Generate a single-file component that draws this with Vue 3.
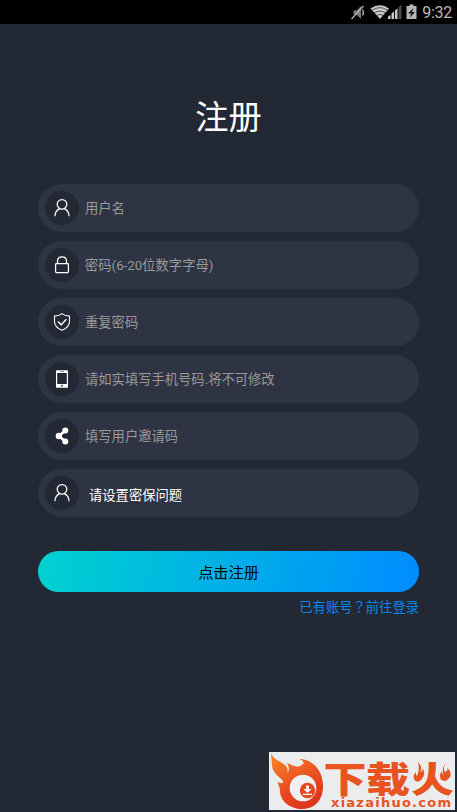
<script setup>
const fields = [
  { icon: 'user', label: '用户名' },
  { icon: 'lock', label: '密码(6-20位数字字母)' },
  { icon: 'shield', label: '重复密码' },
  { icon: 'phone', label: '请如实填写手机号码.将不可修改' },
  { icon: 'share', label: '填写用户邀请码' },
  { icon: 'user', label: '请设置密保问题', select: true },
]
</script>

<template>
  <div class="screen">
    <header class="status">
      <svg class="status-icons" width="70" height="24" viewBox="0 0 70 24">
        <path d="M4.500 10.500h3l4.500-4.500v13l-4.500-4.500h-3z" fill="#777" />
        <path d="M13.500 9.500q2 3 0 6M2.500 19L14.500 6" fill="none" stroke="#b0b0b0" stroke-width="1.300" />
        <path d="M21.500 8.500Q31 1.800 40 8.500L31 19z" fill="#c9c9c9" />
        <path d="M23 10.300Q31 5 38.500 10.300M25 13Q31 9 36.500 13M27.300 15.600Q31 13 34.200 15.600" fill="none" stroke="#000" stroke-width=".6" />
        <path d="M39 19v-2.500l2.500-1.500V19zM42.500 19v-5.500l2.500-2V19zM46 19v-8.500l2.500-2V19z" fill="#c9c9c9" />
        <path d="M49.500 19V7.500L52.500 4.500V19z" fill="#4c4c4c" />
        <path d="M57.500 6h3V4.500h4V6h3v13h-10z" fill="#b5b5b5" />
        <path d="M64.500 8l-5.500 5.500h3l-1 4 5-5.500h-3z" fill="#161616" />
      </svg>
      <span class="time">9:32</span>
    </header>

    <main class="content">
      <h1 class="title">注册</h1>
      <form class="form" @submit.prevent>
        <div v-for="(field, i) in fields" :key="i" class="field">
          <span class="badge">
            <svg width="20" height="20" viewBox="0 0 20 20" fill="none" stroke="#fff" stroke-width="1.25">
              <g v-if="field.icon === 'user'">
                <circle cx="10" cy="6.300" r="4.800" />
                <path d="M2.900 18.300C3 13.800 5.400 11.600 7.700 10.600M12.300 10.600C14.600 11.600 17 13.800 17.100 18.300" />
              </g>
              <g v-else-if="field.icon === 'lock'">
                <rect x="3.600" y="8.500" width="12.800" height="9" rx="0.800" />
                <path d="M5.500 8.500V6.300Q5.500 1.900 10 1.900T14.500 6.300V8.500" />
              </g>
              <g v-else-if="field.icon === 'shield'" stroke-width="1.100">
                <path d="M10 1.700Q12.500 4 17.500 4.100V9.500C17.500 14 14.500 16.500 10 18.300C5.500 16.500 2.500 14 2.500 9.500V4.100Q7.500 4 10 1.700Z" />
                <path d="M6 9.500l3.200 3.200 5.200-5.500" stroke-width="1.400" />
              </g>
              <g v-else-if="field.icon === 'phone'" stroke="none">
                <path fill="#fff" fill-rule="evenodd" d="M4.900 1.300h10.300q.8 0 .8.800v15.800q0 .8-.8.800H4.900q-.9 0-.9-.8V2.100q0-.8.900-.8zM5.200 4v11h9.600V4z" />
                <path d="M8 2.500h4" stroke="#777b84" stroke-width=".7" />
                <circle cx="10" cy="16.700" r=".9" fill="#232835" />
              </g>
              <g v-else fill="#fff" stroke="none">
                <circle cx="6.900" cy="10" r="3.200" />
                <circle cx="13.300" cy="4.500" r="3" />
                <circle cx="13.300" cy="15.600" r="3" />
                <path d="M13.300 4.500L6.900 10l6.400 5.600" fill="none" stroke="#fff" stroke-width="2.600" />
              </g>
            </svg>
          </span>
          <span class="label" :class="{ select: field.select }">{{ field.label }}</span>
        </div>
        <button class="submit">点击注册</button>
      </form>
      <a class="login">已有账号<span class="mark">？</span>前往登录</a>
    </main>

    <svg class="watermark" width="186" height="58" viewBox="0 0 186 58">
      <defs>
        <linearGradient id="flame" x1="0" y1="0" x2=".5" y2="1">
          <stop offset="0" stop-color="#f78a28" />
          <stop offset=".7" stop-color="#e9481e" />
          <stop offset="1" stop-color="#df371c" />
        </linearGradient>
      </defs>
      <rect width="186" height="58" fill="#ebecee" />
      <path fill="url(#flame)" d="M2 1C5 8 11 9 16 13Q20 17 18 21Q22 18 18 11C25 14 29 17 34 12C36 10 33 8 30 7C43 7 54 18 54 34C54 48 46 57 33 57C21 57 11 49 11 39C11 34 8 32 9 30C11 31 13 32 14 30C15 27 4 23 3 14C3 9 2 5 2 1Z" />
      <circle cx="34" cy="36" r="13.300" fill="#eff0f2" />
      <circle cx="38.500" cy="38.500" r="7.700" fill="#e44620" />
      <path d="M37.200 33.500h2.600v3.500h2.700l-4 4-4-4h2.700zM34 41.800h9V43h-9z" fill="#fff" />
      <g class="brand">
        <text x="54.500" y="41" textLength="43" lengthAdjust="spacingAndGlyphs">下</text>
        <text x="97" y="41" textLength="44" lengthAdjust="spacingAndGlyphs">载</text>
        <text x="142" y="41" textLength="43" lengthAdjust="spacingAndGlyphs">火</text>
      </g>
      <path d="M142 9h14.500v17L152 31H142zM171.500 9H186v22h-10l-4.500-5z" fill="#ebecee" />
      <g fill="#e9531f">
        <path d="M149 10Q154 15 151 20Q154 19 153.500 16Q157 22 153 27Q149 32 145.500 28Q143 24 147 20Q146.500 23 148 24Q151 17 149 10Z" />
        <path d="M178 10Q173 15 176 20Q179 19 178.500 16Q183 20 181 25Q176 32 172 27Q169.500 23 173 19Q173 22 174.500 23Q172 15 178 10Z" />
      </g>
      <text class="domain" x="62" y="55" textLength="120" lengthAdjust="spacing">xiazaihuo.com</text>
    </svg>
  </div>
</template>

<style>
body { margin: 0; background: #232835; }
</style>

<style scoped>
.screen {
  position: relative;
  box-sizing: border-box;
  width: 457px;
  height: 812px;
  overflow: hidden;
  background: #232835;
  font-family: Roboto, "Noto Sans CJK SC", sans-serif;
}
.status {
  display: flex;
  justify-content: flex-end;
  align-items: center;
  gap: 3px;
  height: 24px;
  padding-right: 5px;
  background: #000;
}
.time { color: #b9b9b9; font-size: 16px; line-height: 24px; padding-top: 2px; letter-spacing: -.3px; }
.content { display: flex; flex-direction: column; padding: 0 38px; }
.title {
  margin: 70px 0 0;
  height: 90px;
  color: #fff;
  font-size: 33.300px;
  font-weight: 400;
  line-height: 48px;
  text-align: center;
}
.form { display: flex; flex-direction: column; gap: 9px; }
.field {
  display: flex;
  align-items: center;
  box-sizing: border-box;
  height: 48px;
  padding-left: 7px;
  border-radius: 24px;
  background: #2e3443;
}
.badge {
  display: flex;
  align-items: center;
  justify-content: center;
  width: 34px;
  height: 34px;
  border-radius: 50%;
  background: #232835;
}
.label { margin-left: 6px; padding-top: 2px; color: #999; font-size: 13.300px; line-height: 20px; }
.select { margin-left: 10px; padding-top: 6px; color: #fff; }
.submit {
  height: 41.500px;
  margin-top: 24.500px;
  padding: 2px 0 0;
  border: 0;
  border-radius: 21px;
  background: linear-gradient(100deg, #00d2d0, #008cff);
  color: #000;
  font: 15.200px/40px Roboto, "Noto Sans CJK SC", sans-serif;
}
.login { align-self: flex-end; margin-top: 5px; color: #0786ee; font-size: 13.300px; line-height: 20px; }
.mark { font-family: "Noto Sans CJK TC", sans-serif; }
.watermark { position: absolute; left: 269px; top: 752px; }
.brand { fill: #e9531f; font: 900 36px "Noto Sans CJK SC", sans-serif; }
.domain { fill: #e9531f; font: 700 13px "DejaVu Sans", sans-serif; }
</style>
